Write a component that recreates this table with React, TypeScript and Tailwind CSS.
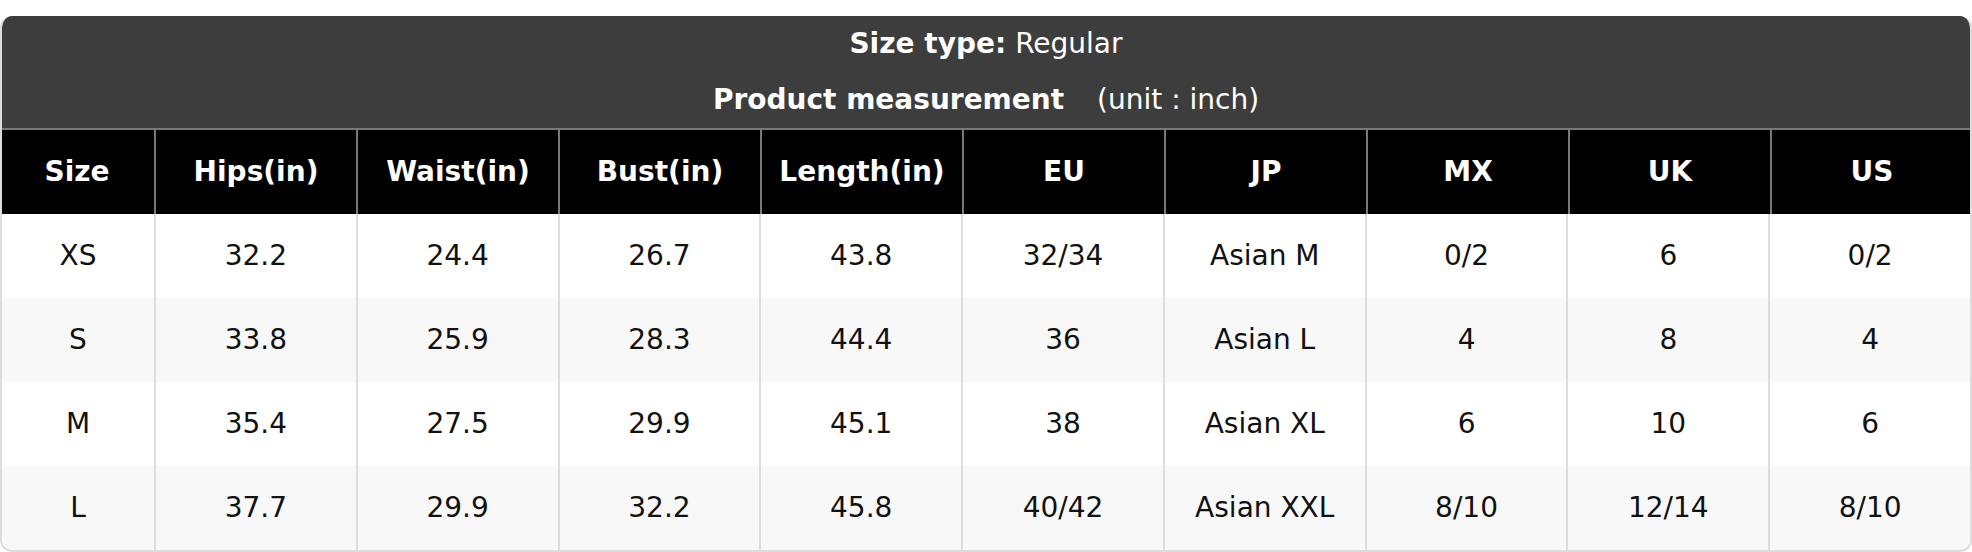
import React from "react";

const headers = ["Size", "Hips(in)", "Waist(in)", "Bust(in)", "Length(in)", "EU", "JP", "MX", "UK", "US"];
const rows = [
  ["XS", "32.2", "24.4", "26.7", "43.8", "32/34", "Asian M", "0/2", "6", "0/2"],
  ["S", "33.8", "25.9", "28.3", "44.4", "36", "Asian L", "4", "8", "4"],
  ["M", "35.4", "27.5", "29.9", "45.1", "38", "Asian XL", "6", "10", "6"],
  ["L", "37.7", "29.9", "32.2", "45.8", "40/42", "Asian XXL", "8/10", "12/14", "8/10"],
];

export default function App() {
  return (
    <div className="w-[1972px] h-[552px] bg-white pt-[16px] font-['DejaVu_Sans',sans-serif]">
      <div className="rounded-[12px] overflow-hidden border-x-2 border-b-2 border-[#dddddd]">
        <div className="bg-[#3d3d3d] text-white text-[28px] -mx-[2px]">
          <div className="h-[56px] flex items-center justify-center">
            <span className="font-bold">Size type:</span>
            <span className="ml-[9px]">Regular</span>
          </div>
          <div className="h-[56px] flex items-center justify-center">
            <span className="font-bold">Product measurement</span>
            <span className="ml-[33px]">(unit : inch)</span>
          </div>
        </div>
        <div className="grid grid-cols-[154px_repeat(9,1fr)] bg-black text-white font-bold text-[28px] border-t-2 border-[#7a7a7a] -mx-[2px]">
          {headers.map((h, i) => (
            <div
              key={h}
              className={`h-[84px] flex items-center justify-center ${i > 0 ? "border-l-2 border-[#7a7a7a]" : ""}`}
            >
              {h}
            </div>
          ))}
        </div>
        {rows.map((r, ri) => (
          <div
            key={ri}
            className={`grid grid-cols-[152px_repeat(9,1fr)] text-[28px] text-[#111111] ${ri % 2 === 1 ? "bg-[#f8f8f8]" : "bg-white"}`}
          >
            {r.map((c, i) => (
              <div
                key={i}
                className={`h-[84px] flex items-center justify-center ${i > 0 ? "border-l-2 border-[#dddddd]" : ""}`}
              >
                {c}
              </div>
            ))}
          </div>
        ))}
      </div>
    </div>
  );
}
